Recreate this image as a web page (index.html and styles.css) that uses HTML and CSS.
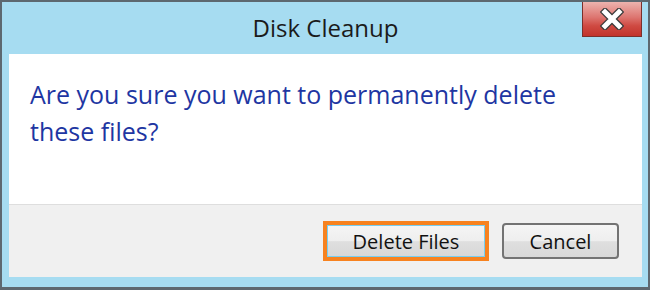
FILE: index.html
```html
<!DOCTYPE html>
<html lang="en">
<head>
  <meta charset="UTF-8">
  <title>Disk Cleanup</title>
  <link rel="stylesheet" href="styles.css">
</head>
<body>
  <div class="window">
    <div class="titlebar">
      <span></span>
      <h1 class="title">Disk Cleanup</h1>
      <button class="close" aria-label="Close">
        <svg width="24" height="22" viewBox="0 0 24 22">
          <path d="M5 4 L19 18 M19 4 L5 18" stroke="#3b3b3b" stroke-width="7.5" stroke-linecap="square" fill="none"/>
          <path d="M5 4 L19 18 M19 4 L5 18" stroke="#ffffff" stroke-width="5" stroke-linecap="square" fill="none"/>
        </svg>
      </button>
    </div>

    <div class="content">
      <p class="message">Are you sure you want to permanently delete these files?</p>
    </div>

    <div class="footer">
      <div class="highlight">
        <button class="btn btn-default">Delete Files</button>
      </div>
      <button class="btn">Cancel</button>
    </div>
  </div>
</body>
</html>
```

FILE: styles.css
```css
* {
  margin: 0;
  padding: 0;
  box-sizing: border-box;
}
body {
  font-family: "Open Sans", sans-serif;
  background: #ffffff;
}
.window {
  width: 650px;
  height: 290px;
  display: flex;
  flex-direction: column;
  background: #a6dcf1;
  border: 2px solid #5d6870;
  border-bottom-width: 3px;
  padding: 0 6px 10px 7px;
}
.titlebar {
  height: 52px;
  flex-shrink: 0;
  display: grid;
  grid-template-columns: 1fr auto 1fr;
}
.title {
  padding-top: 9px;
  font-size: 24px;
  font-weight: 400;
  line-height: 33px;
  color: #1b1b1b;
}
.close {
  justify-self: end;
  align-self: start;
  width: 60px;
  height: 35px;
  display: flex;
  align-items: center;
  justify-content: center;
  border: 1px solid #7a302b;
  border-top: none;
  background: linear-gradient(#ecb3ae, #dd7570 45%, #cf4a42 70%, #c2332b);
}
.content {
  height: 150px;
  flex-shrink: 0;
  background: #ffffff;
  padding: 22px 30px 0 21px;
}
.message {
  font-size: 25px;
  line-height: 37px;
  color: #1e36a2;
}
.footer {
  height: 73px;
  flex-shrink: 0;
  display: flex;
  justify-content: flex-end;
  align-items: center;
  gap: 13px;
  padding-right: 23px;
  background: #f0f0f0;
  border-top: 1px solid #dedede;
}
.highlight {
  display: flex;
  border: 4px solid #f7821f;
}
.btn {
  width: 117px;
  height: 36px;
  display: flex;
  align-items: center;
  justify-content: center;
  font-family: inherit;
  font-size: 20px;
  color: #111111;
  border: 2px solid #737373;
  border-radius: 4px;
  background: linear-gradient(#f5f5f5, #eeeeee 50%, #dfdfdf 52%, #d8d8d8);
}
.btn-default {
  width: 158px;
  height: 32px;
  border: 1px solid #77cef0;
  border-radius: 0;
}
```
